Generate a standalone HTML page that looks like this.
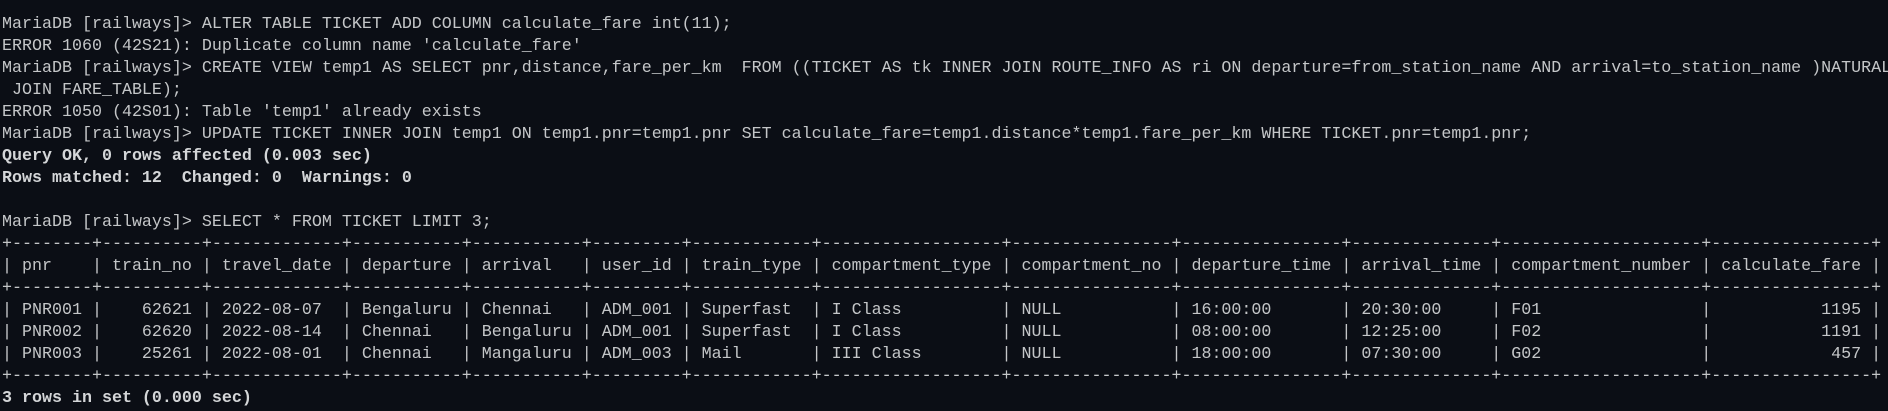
<!DOCTYPE html>
<html><head><meta charset="utf-8"><style>
html,body{margin:0;padding:0;background:#0b0e15;width:1888px;height:411px;overflow:hidden}
pre{margin:0;padding:14px 0 0 2px;font-family:"Liberation Mono","DejaVu Sans Mono",monospace;font-size:16.67px;line-height:22px;color:#c4c6c8;white-space:pre;letter-spacing:0}
b{color:#d4d6d8}
</style></head><body><pre>MariaDB [railways]&gt; ALTER TABLE TICKET ADD COLUMN calculate_fare int(11);
ERROR 1060 (42S21): Duplicate column name 'calculate_fare'
MariaDB [railways]&gt; CREATE VIEW temp1 AS SELECT pnr,distance,fare_per_km  FROM ((TICKET AS tk INNER JOIN ROUTE_INFO AS ri ON departure=from_station_name AND arrival=to_station_name )NATURAL
 JOIN FARE_TABLE);
ERROR 1050 (42S01): Table 'temp1' already exists
MariaDB [railways]&gt; UPDATE TICKET INNER JOIN temp1 ON temp1.pnr=temp1.pnr SET calculate_fare=temp1.distance*temp1.fare_per_km WHERE TICKET.pnr=temp1.pnr;
<b>Query OK, 0 rows affected (0.003 sec)</b>
<b>Rows matched: 12  Changed: 0  Warnings: 0</b>

MariaDB [railways]&gt; SELECT * FROM TICKET LIMIT 3;
+--------+----------+-------------+-----------+-----------+---------+------------+------------------+----------------+----------------+--------------+--------------------+----------------+
| pnr    | train_no | travel_date | departure | arrival   | user_id | train_type | compartment_type | compartment_no | departure_time | arrival_time | compartment_number | calculate_fare |
+--------+----------+-------------+-----------+-----------+---------+------------+------------------+----------------+----------------+--------------+--------------------+----------------+
| PNR001 |    62621 | 2022-08-07  | Bengaluru | Chennai   | ADM_001 | Superfast  | I Class          | NULL           | 16:00:00       | 20:30:00     | F01                |           1195 |
| PNR002 |    62620 | 2022-08-14  | Chennai   | Bengaluru | ADM_001 | Superfast  | I Class          | NULL           | 08:00:00       | 12:25:00     | F02                |           1191 |
| PNR003 |    25261 | 2022-08-01  | Chennai   | Mangaluru | ADM_003 | Mail       | III Class        | NULL           | 18:00:00       | 07:30:00     | G02                |            457 |
+--------+----------+-------------+-----------+-----------+---------+------------+------------------+----------------+----------------+--------------+--------------------+----------------+
<b>3 rows in set (0.000 sec)</b></pre></body></html>
